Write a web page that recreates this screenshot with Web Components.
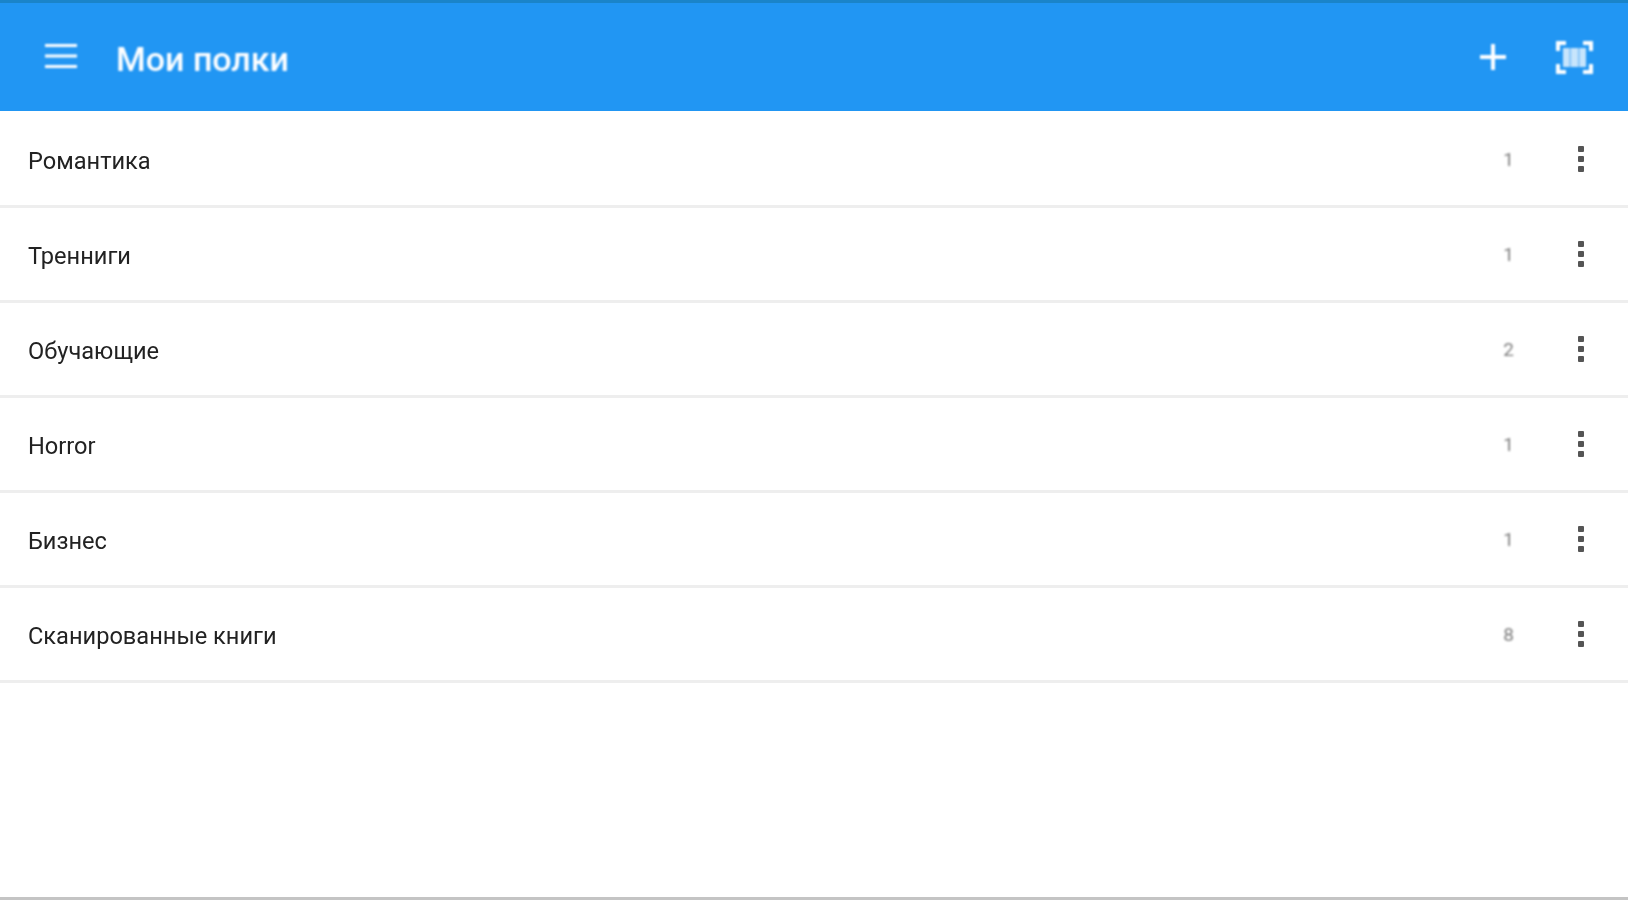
<!DOCTYPE html>
<html>
<head>
<meta charset="utf-8">
<style>
    html, body { margin: 0; height: 100%; background: #fff; }
    body { font-family: Roboto, "Liberation Sans", sans-serif; }
</style>
</head>
<body>
<shelf-app>
    <shelf-bar title-text="Мои полки"></shelf-bar>
    <shelf-row name="Романтика" count="1"></shelf-row>
    <shelf-row name="Тренниги" count="1"></shelf-row>
    <shelf-row name="Обучающие" count="2"></shelf-row>
    <shelf-row name="Horror" count="1"></shelf-row>
    <shelf-row name="Бизнес" count="1"></shelf-row>
    <shelf-row name="Сканированные книги" count="8"></shelf-row>
</shelf-app>
<script>
class ShelfApp extends HTMLElement {
    constructor() {
        super();
        this.attachShadow({ mode: 'open' });
        this.shadowRoot.innerHTML = `
            <style>
                :host {
                    display: flex;
                    flex-direction: column;
                    height: 900px;
                    box-sizing: border-box;
                    border-bottom: 3px solid #c4c4c4;
                    background: #fff;
                    overflow: hidden;
                }
            </style>
            <slot></slot>
        `;
    }
}

class ShelfBar extends HTMLElement {
    constructor() {
        super();
        this.attachShadow({ mode: 'open' });
    }

    connectedCallback() {
        this.shadowRoot.innerHTML = `
            <style>
                :host {
                    display: flex;
                    align-items: center;
                    flex: none;
                    height: 111px;
                    margin-bottom: 2px;
                    box-sizing: border-box;
                    border-top: 3px solid #1a84c9;
                    padding: 0 35px 0 45px;
                    background: #2196f3;
                    color: #fff;
                }
                svg { display: block; fill: #fff; filter: blur(0.8px); }
                .menu { margin-top: -2px; }
                .title {
                    flex: 1;
                    margin-left: 39px;
                    padding-top: 4px;
                    font-size: 34px;
                    font-weight: 500;
                    filter: blur(0.8px);
                }
                .add { margin-right: 50px; }
            </style>
            <svg class="menu" width="32" height="24" viewBox="0 0 32 24">
                <rect y="0" width="32" height="3"/>
                <rect y="10.5" width="32" height="3"/>
                <rect y="21" width="32" height="3"/>
            </svg>
            <span class="title">${this.getAttribute('title-text')}</span>
            <svg class="add" width="26" height="26" viewBox="0 0 26 26">
                <rect y="11" width="26" height="4"/>
                <rect x="11" width="4" height="26"/>
            </svg>
            <svg width="37" height="33" viewBox="0 0 37 33">
                <path d="M0 0h10v4H4v6H0zM27 0h10v10h-4V4h-6zM0 23h4v6h6v4H0zM33 23h4v10H27v-4h6z"/>
                <path d="M7 7h23v19H7z" opacity=".75"/>
                <path d="M13.5 7h1.5v19h-1.5zM22 7h1.5v19H22z" fill="#2196f3" opacity=".5"/>
            </svg>
        `;
    }
}

class ShelfRow extends HTMLElement {
    constructor() {
        super();
        this.attachShadow({ mode: 'open' });
    }

    connectedCallback() {
        this.shadowRoot.innerHTML = `
            <style>
                :host {
                    display: flex;
                    align-items: center;
                    flex: none;
                    height: 95px;
                    box-sizing: border-box;
                    border-bottom: 3px solid #eeeeee;
                    padding: 4px 44px 0 28px;
                }
                .name {
                    flex: 1;
                    font-size: 23.6px;
                    color: #222;
                    filter: blur(0.7px);
                }
                .count {
                    margin: -3px 64px 0 0;
                    font-size: 19px;
                    color: #7c7c7c;
                    filter: blur(0.8px);
                }
                svg { display: block; margin-top: -5px; fill: #555; filter: blur(0.7px); }
            </style>
            <span class="name">${this.getAttribute('name')}</span>
            <span class="count">${this.getAttribute('count')}</span>
            <svg width="6" height="26" viewBox="0 0 6 26">
                <rect width="6" height="6" rx="1"/>
                <rect y="10" width="6" height="6" rx="1"/>
                <rect y="20" width="6" height="6" rx="1"/>
            </svg>
        `;
    }
}

customElements.define('shelf-app', ShelfApp);
customElements.define('shelf-bar', ShelfBar);
customElements.define('shelf-row', ShelfRow);
</script>
</body>
</html>
